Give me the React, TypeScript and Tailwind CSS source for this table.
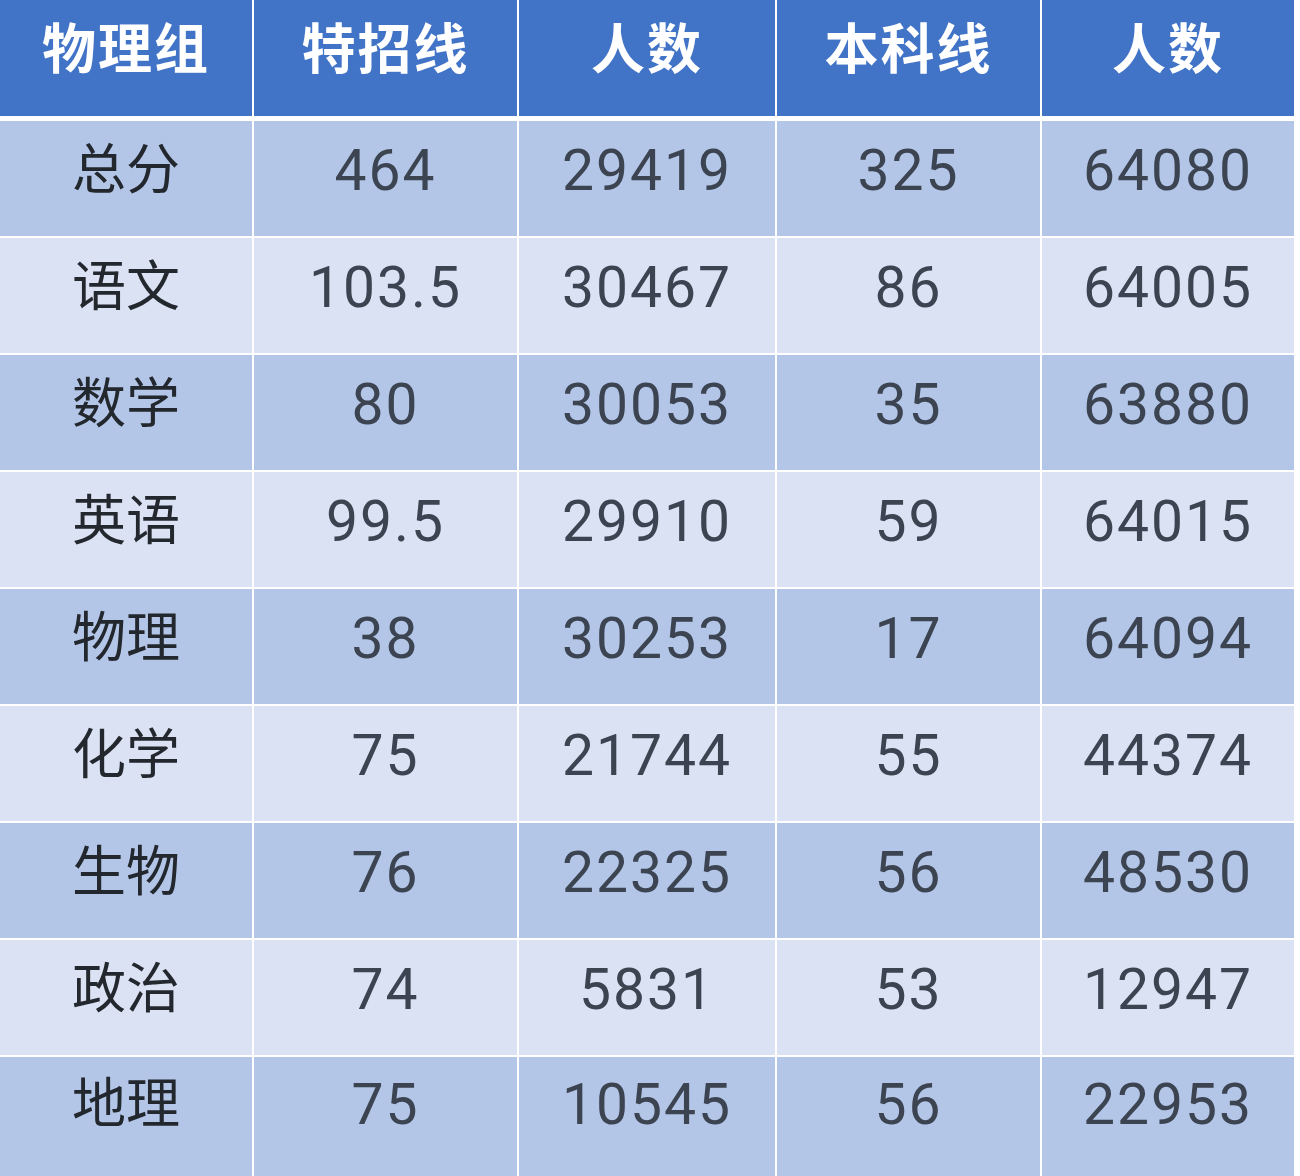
const HEADERS = ["物理组", "特招线", "人数", "本科线", "人数"];

const ROWS: [string, string, string, string, string][] = [
  ["总分", "464", "29419", "325", "64080"],
  ["语文", "103.5", "30467", "86", "64005"],
  ["数学", "80", "30053", "35", "63880"],
  ["英语", "99.5", "29910", "59", "64015"],
  ["物理", "38", "30253", "17", "64094"],
  ["化学", "75", "21744", "55", "44374"],
  ["生物", "76", "22325", "56", "48530"],
  ["政治", "74", "5831", "53", "12947"],
  ["地理", "75", "10545", "56", "22953"],
];

const COLS = "grid grid-cols-[252px_263px_256px_263px_252px] gap-x-[2px]";

export default function App() {
  return (
    <div
      className="w-[1300px] h-[1176px] bg-white overflow-hidden"
      style={{ fontFamily: 'Roboto, "Noto Sans CJK SC", sans-serif' }}
    >
      {/* Header */}
      <div className={`${COLS} h-[116px]`}>
        {HEADERS.map((h, i) => (
          <div
            key={i}
            className="bg-[#4173c6] flex items-center justify-center pb-4 text-white text-[54px] font-bold tracking-[2px]"
          >
            {h}
          </div>
        ))}
      </div>

      {/* Body */}
      <div className="mt-[5px] flex flex-col gap-y-[2px]">
        {ROWS.map((row, r) => (
          <div key={r} className={`${COLS} ${r === ROWS.length - 1 ? "h-[119px]" : "h-[115px]"}`}>
            {row.map((cell, c) => (
              <div
                key={c}
                className={`flex items-center justify-center ${r === ROWS.length - 1 ? "pb-6" : "pb-4"} ${
                  r % 2 === 0 ? "bg-[#b3c6e7]" : "bg-[#dbe2f4]"
                } ${
                  c === 0
                    ? "text-[54px] text-[#23272e]"
                    : "text-[57px] text-[#3c4452] tracking-[2px]"
                }`}
              >
                {cell}
              </div>
            ))}
          </div>
        ))}
      </div>
    </div>
  );
}
